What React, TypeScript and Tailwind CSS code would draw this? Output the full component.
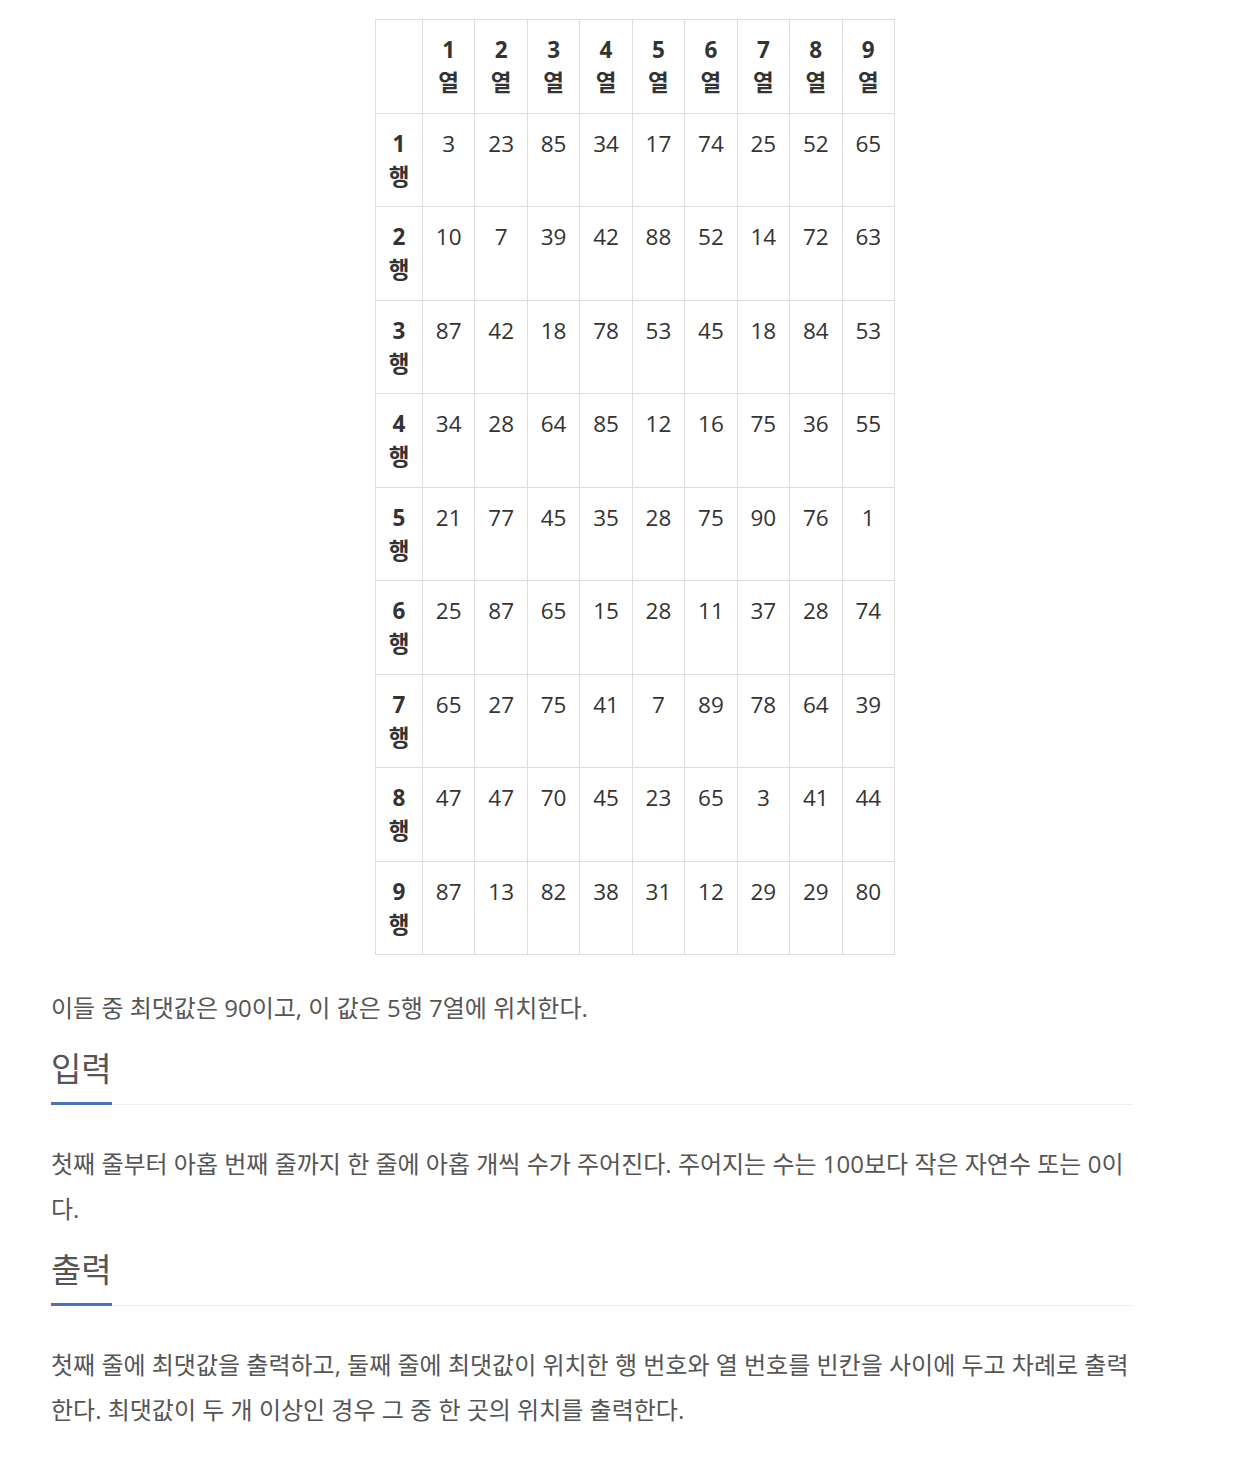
const GRID = [
  [3, 23, 85, 34, 17, 74, 25, 52, 65],
  [10, 7, 39, 42, 88, 52, 14, 72, 63],
  [87, 42, 18, 78, 53, 45, 18, 84, 53],
  [34, 28, 64, 85, 12, 16, 75, 36, 55],
  [21, 77, 45, 35, 28, 75, 90, 76, 1],
  [25, 87, 65, 15, 28, 11, 37, 28, 74],
  [65, 27, 75, 41, 7, 89, 78, 64, 39],
  [47, 47, 70, 45, 23, 65, 3, 41, 44],
  [87, 13, 82, 38, 31, 12, 29, 29, 80],
]

const FONT = "font-['Open_Sans','Noto_Sans_CJK_KR',sans-serif]"

function Headline({ title }: { title: string }) {
  return (
    <div className="mt-[19px] border-b border-dotted border-[#ddd]">
      <h2 className="inline-block -mb-px border-b-[3px] border-[#4a73b6] pb-[13px] text-[33px] leading-[40px] text-[#555] font-normal">
        {title}
      </h2>
    </div>
  )
}

export default function App() {
  return (
    <div className={`${FONT} w-[1233px] bg-white pl-[51px] pt-[19px] pb-[20px]`}>
      <div className="w-[1081px]">
        <table className="ml-[324px] w-[520px] table-fixed border-collapse text-[22.5px] leading-[33px] text-[#333]">
          <colgroup>
            <col className="w-[47px]" />
            {GRID[0].map((_, i) => (
              <col key={i} />
            ))}
          </colgroup>
          <thead>
            <tr>
              <th className="border border-[#ddd] px-0 py-[13.25px]" />
              {GRID[0].map((_, i) => (
                <th key={i} className="border border-[#ddd] px-0 py-[13.25px] text-center font-bold align-top">
                  {i + 1}
                  <br />열
                </th>
              ))}
            </tr>
          </thead>
          <tbody>
            {GRID.map((row, r) => (
              <tr key={r}>
                <th className="border border-[#ddd] px-0 py-[13.25px] text-center font-bold align-top">
                  {r + 1}
                  <br />행
                </th>
                {row.map((v, c) => (
                  <td key={c} className="border border-[#ddd] px-0 py-[13.25px] text-center align-top">
                    {v}
                  </td>
                ))}
              </tr>
            ))}
          </tbody>
        </table>

        <p className="mt-[30px] text-[24px] leading-[45px] text-[#555]">
          이들 중 최댓값은 90이고, 이 값은 5행 7열에 위치한다.
        </p>

        <Headline title="입력" />
        <p className="mt-[36px] text-[24px] leading-[45px] text-[#555]">
          첫째 줄부터 아홉 번째 줄까지 한 줄에 아홉 개씩 수가 주어진다. 주어지는 수는 100보다 작은 자연수 또는 0이다.
        </p>

        <Headline title="출력" />
        <p className="mt-[36px] text-[24px] leading-[45px] text-[#555]">
          첫째 줄에 최댓값을 출력하고, 둘째 줄에 최댓값이 위치한 행 번호와 열 번호를 빈칸을 사이에 두고 차례로 출력한다. 최댓값이 두 개 이상인 경우 그 중 한 곳의 위치를 출력한다.
        </p>
      </div>
    </div>
  )
}
